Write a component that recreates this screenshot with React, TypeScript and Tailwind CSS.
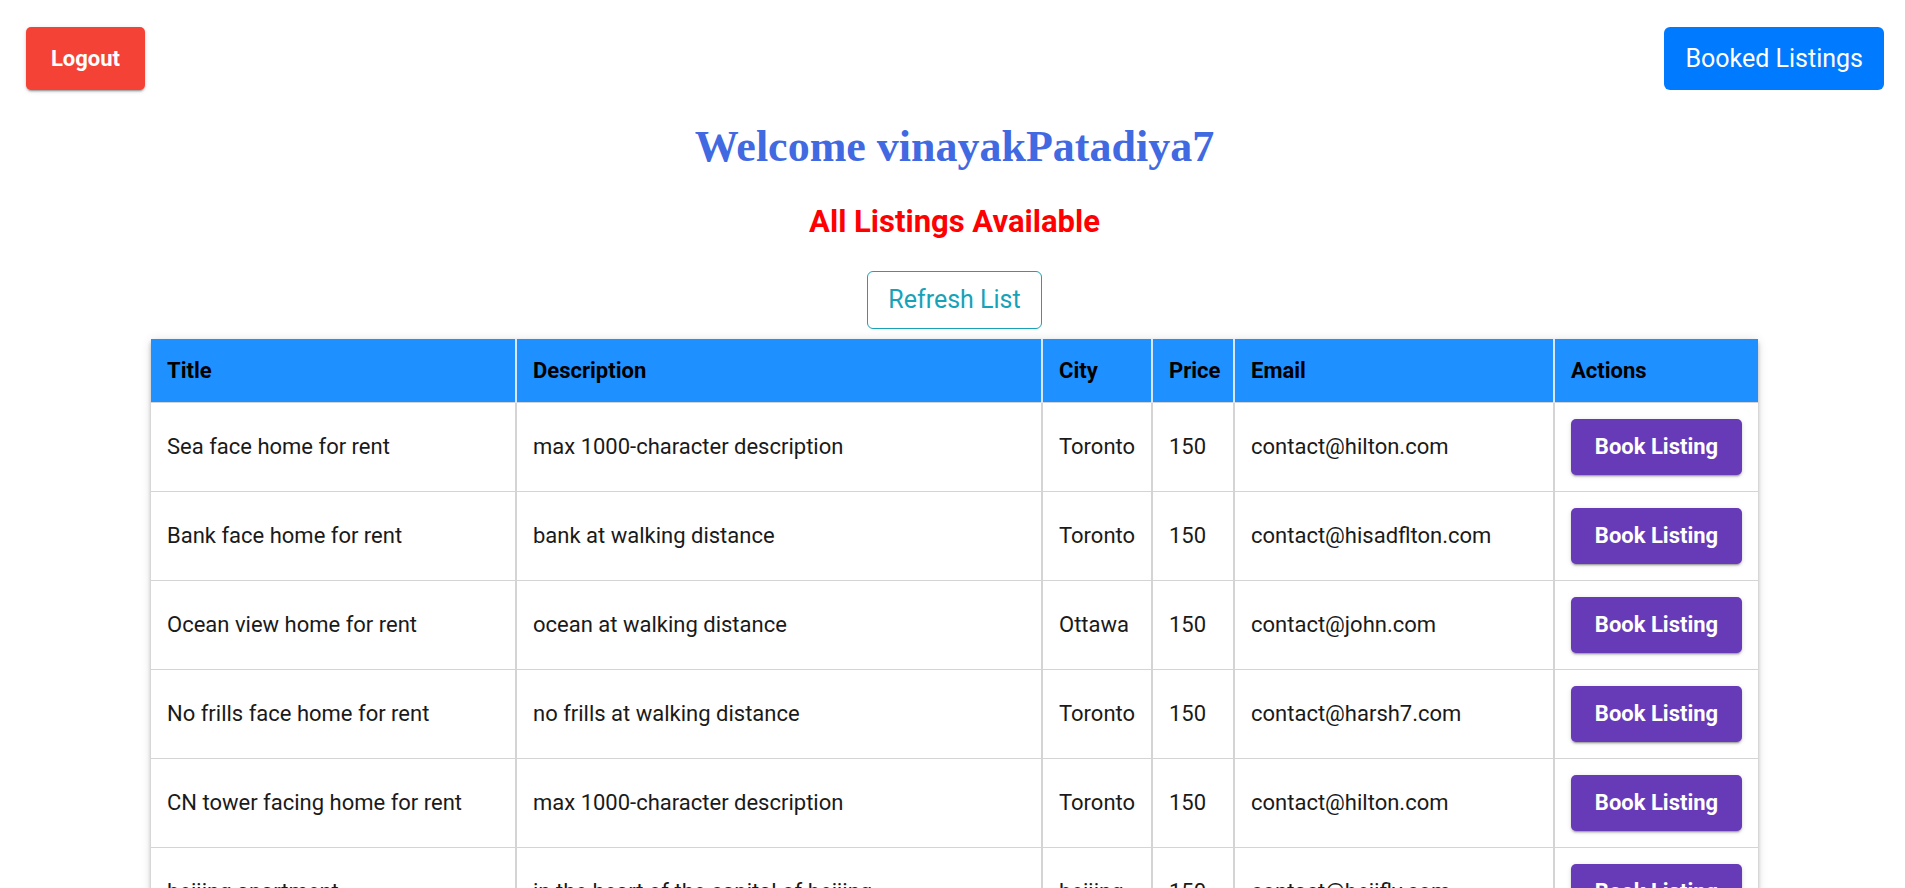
import React from 'react';

interface Listing {
  title: string;
  description: string;
  city: string;
  price: number;
  email: string;
}

const listings: Listing[] = [
  { title: 'Sea face home for rent', description: 'max 1000-character description', city: 'Toronto', price: 150, email: 'contact@hilton.com' },
  { title: 'Bank face home for rent', description: 'bank at walking distance', city: 'Toronto', price: 150, email: 'contact@hisadflton.com' },
  { title: 'Ocean view home for rent', description: 'ocean at walking distance', city: 'Ottawa', price: 150, email: 'contact@john.com' },
  { title: 'No frills face home for rent', description: 'no frills at walking distance', city: 'Toronto', price: 150, email: 'contact@harsh7.com' },
  { title: 'CN tower facing home for rent', description: 'max 1000-character description', city: 'Toronto', price: 150, email: 'contact@hilton.com' },
  { title: 'beijing apartment', description: 'in the heart of the capital of beijing', city: 'beijing', price: 150, email: 'contact@beijfly.com' },
];

const headers = ['Title', 'Description', 'City', 'Price', 'Email', 'Actions'];

export default function App() {
  return (
    <div className="min-h-screen bg-white font-['Roboto',sans-serif] pb-10">
      {/* top bar */}
      <div className="flex justify-between items-start pt-[27px] pl-[26px] pr-[21px]">
        <button className="w-[119px] h-[63px] bg-[#f44336] text-white text-[22px] font-bold rounded-[5px] shadow-[0_3px_1px_-2px_rgba(0,0,0,0.2),0_2px_2px_0_rgba(0,0,0,0.14),0_1px_5px_0_rgba(0,0,0,0.12)]">
          Logout
        </button>
        <button className="h-[63px] px-[21px] bg-[#007bff] text-white text-[25px] leading-[36px] rounded-[6px]">
          Booked Listings
        </button>
      </div>

      <div className="flex flex-col items-center pl-[4px]">
        <h1 className="mt-[35px] text-[44px] leading-[44px] font-bold text-[#4169e1] font-['Liberation_Serif','Times_New_Roman',serif]">
          Welcome vinayakPatadiya7
        </h1>
        <h2 className="mt-[38px] text-[31px] leading-[30px] font-bold text-[#ff0000]">
          All Listings Available
        </h2>
        <button className="mt-[34px] h-[58px] px-[20px] border border-[#17a2b8] text-[#17a2b8] text-[25px] leading-[30px] rounded-[6px]">
          Refresh List
        </button>

        <table className="mt-[10px] w-[1607px] table-fixed border-collapse bg-white shadow-[0_2px_4px_-1px_rgba(0,0,0,0.2),0_4px_5px_0_rgba(0,0,0,0.14),0_1px_10px_0_rgba(0,0,0,0.12)]">
          <colgroup>
            <col className="w-[365px]" />
            <col className="w-[526px]" />
            <col className="w-[110px]" />
            <col className="w-[82px]" />
            <col className="w-[320px]" />
            <col className="w-[204px]" />
          </colgroup>
          <thead>
            <tr className="h-[63px] bg-[#1e90ff]">
              {headers.map((h, i) => (
                <th
                  key={h}
                  className={`text-left px-4 text-[22px] font-bold text-black border-b border-[#d4d4d4] ${i > 0 ? 'border-l-2 border-l-[#d9e6f5]' : ''}`}
                >
                  {h}
                </th>
              ))}
            </tr>
          </thead>
          <tbody>
            {listings.map((l, idx) => (
              <tr key={idx} className="h-[89px] text-[22px] text-[#1a1a1a]">
                <td className="px-4 border-b border-[#d4d4d4]">{l.title}</td>
                <td className="px-4 border-b border-l-2 border-[#d4d4d4]">{l.description}</td>
                <td className="px-4 border-b border-l-2 border-[#d4d4d4]">{l.city}</td>
                <td className="px-4 border-b border-l-2 border-[#d4d4d4]">{l.price}</td>
                <td className="px-4 border-b border-l-2 border-[#d4d4d4]">{l.email}</td>
                <td className="px-4 border-b border-l-2 border-[#d4d4d4]">
                  <button className="w-[171px] h-[56px] bg-[#673ab7] text-white text-[22px] font-bold rounded-[5px] shadow-[0_3px_1px_-2px_rgba(0,0,0,0.2),0_2px_2px_0_rgba(0,0,0,0.14),0_1px_5px_0_rgba(0,0,0,0.12)]">
                    Book Listing
                  </button>
                </td>
              </tr>
            ))}
          </tbody>
        </table>
      </div>
    </div>
  );
}
